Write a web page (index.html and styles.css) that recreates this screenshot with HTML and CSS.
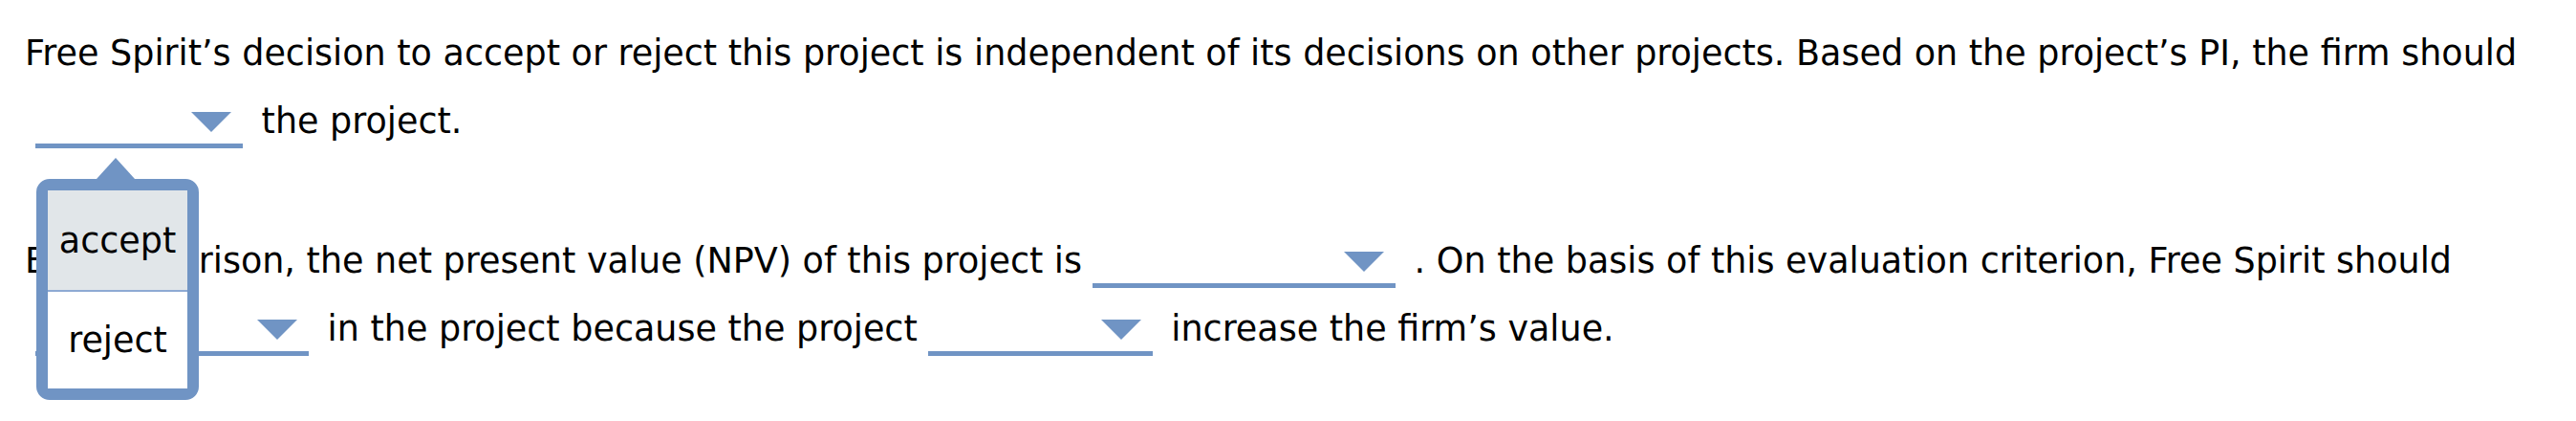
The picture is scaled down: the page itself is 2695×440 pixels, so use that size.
FILE: index.html
```html
<!DOCTYPE html>
<html lang="en">
<head>
<meta charset="utf-8">
<title>Free Spirit project evaluation</title>
<link rel="stylesheet" href="styles.css">
</head>
<body>
<div class="question">
  <p class="para">Free Spirit’s decision to accept or reject this project is independent of its decisions on other projects. Based on the project’s PI, the firm should<wbr><span class="dd dd-pi"><span class="arrow"></span><span class="menu"><span class="caret"></span><span class="opt opt-active">accept</span><span class="opt">reject</span></span></span> the project.</p>
  <p class="para para-npv">By comparison, the net present value (NPV) of this project is<wbr><span class="dd dd-npv"><span class="arrow"></span></span> . On the basis of this evaluation criterion, Free Spirit should<wbr><span class="dd dd-invest"><span class="arrow"></span></span> in the project because the project<wbr><span class="dd dd-will"><span class="arrow"></span></span> increase the firm’s value.</p>
</div>
</body>
</html>
```
FILE: styles.css
```css
html, body {
  margin: 0;
  padding: 0;
  background: #ffffff;
}

body {
  min-height: 440px;
}

.question {
  padding: 20px 10px 61px 26px;
  font-family: "DejaVu Sans", Verdana, sans-serif;
  font-size: 36.5px;
  line-height: 71px;
  color: #000000;
}

.para {
  margin: 0;
}

.para-npv {
  margin-top: 75px;
}

.dd {
  position: relative;
  display: inline-block;
  box-sizing: border-box;
  height: 38px;
  margin-left: 11px;
  margin-right: 8px;
  padding-right: 12px;
  border-bottom: 5px solid #7094c4;
  vertical-align: -16px;
}

.dd-pi { width: 217px; }
.dd-npv { width: 317px; }
.dd-invest { width: 286px; }
.dd-will { width: 235px; }

.arrow {
  float: right;
  width: 0;
  height: 0;
  border-left: 21.5px solid transparent;
  border-right: 21.5px solid transparent;
  border-top: 21px solid #7094c4;
}

.menu {
  position: absolute;
  left: 1px;
  top: 70px;
  z-index: 2;
  display: flex;
  flex-direction: column;
  width: 146px;
  border: 12px solid #7094c4;
  border-radius: 14px;
  background: #ffffff;
  line-height: normal;
}

.caret {
  position: absolute;
  top: -34px;
  left: 51px;
  width: 0;
  height: 0;
  border-left: 20px solid transparent;
  border-right: 20px solid transparent;
  border-bottom: 22px solid #7094c4;
}

.opt {
  display: flex;
  align-items: center;
  justify-content: center;
  height: 101px;
  background: #ffffff;
}

.opt-active {
  height: 104px;
  background: #e1e6e9;
  border-bottom: 2px solid #8eaad3;
}
```
